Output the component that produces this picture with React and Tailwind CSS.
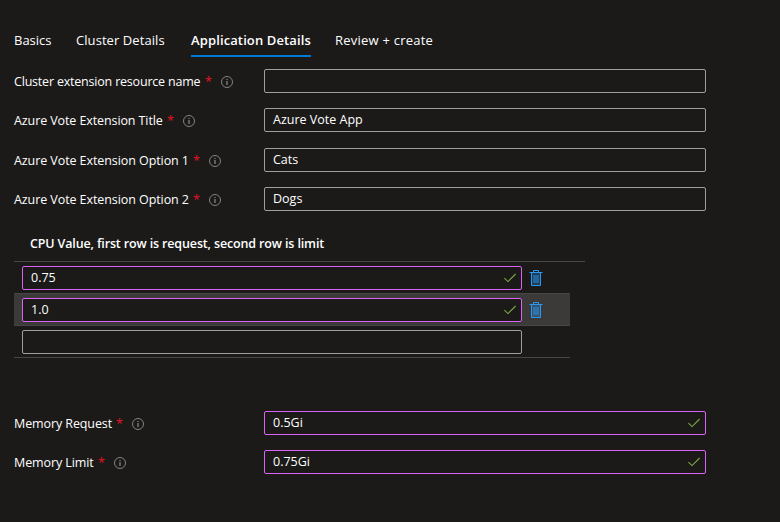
function Info() {
  return (
    <svg className="mt-px h-3 w-3 shrink-0" viewBox="0 0 12 12" fill="none" stroke="#85827f">
      <circle cx="6" cy="6" r="5.5" />
      <path d="M6 5v4M6 3v1" strokeWidth="1.3" />
    </svg>
  );
}

function Check() {
  return (
    <svg className="h-3 w-3 shrink-0" viewBox="0 0 12 12" fill="none" stroke="#7da345" strokeWidth="1.1">
      <path d="M.4 6.2 4 9.6 11.6 2" />
    </svg>
  );
}

function Trash() {
  return (
    <svg className="h-4 w-3.5 shrink-0" viewBox="0 0 14 16" fill="none" stroke="#2899f5">
      <path d="M2.5 3h9v12.5h-9z" fill="#2899f5" fillOpacity=".28" stroke="none" />
      <path d="M.5 2.5h13M4.5 2.5v-2h5v2M2.5 3v12.5h9V3" />
      <path d="M4 5h6v8H4z" fill="#2899f5" fillOpacity=".45" stroke="none" />
    </svg>
  );
}

function Field({ value = "", valid = false }) {
  return (
    <div
      className={`flex h-6 w-full items-center justify-between rounded-[2px] border bg-[#1b1a19] pl-2 pr-[5px] ${
        valid ? "border-[#da64f8]" : "border-[#a19f9d]"
      }`}
    >
      <span>{value}</span>
      {valid && <Check />}
    </div>
  );
}

function Row({ label, width, value, valid }) {
  return (
    <div className="flex h-6">
      <div className="flex w-[250px] shrink-0 items-center pt-px">
        <span className={`${width} whitespace-nowrap`}>{label}</span>
        <span className="ml-1 w-[6px] text-[#e81123]">*</span>
        <span className="ml-[10px]"><Info /></span>
      </div>
      <div className="w-[442px]"><Field value={value} valid={valid} /></div>
    </div>
  );
}

const tab = "h-[33px] whitespace-nowrap text-[13px] leading-[33px]";

export default function App() {
  return (
    <main className="h-[522px] w-[780px] overflow-hidden bg-[#1b1a19] pl-[14px] pt-6 font-['Open_Sans','Noto_Sans',sans-serif] text-[12.5px] leading-4 text-white">
      <nav className="flex">
        <span className={`${tab} w-[62px]`}>Basics</span>
        <span className={`${tab} w-[115px] tracking-[0.07px]`}>Cluster Details</span>
        <span className={`${tab} w-[120px] border-b-2 border-[#0078d4] font-semibold tracking-[0.12px]`}>Application Details</span>
        <span className={`${tab} ml-6 tracking-[0.23px]`}>Review + create</span>
      </nav>
      <section className="mt-3">
        <Row label="Cluster extension resource name" width="w-[187px] tracking-[-0.2px]" />
        <div className="mt-[15px]"><Row label="Azure Vote Extension Title" width="w-[149px] tracking-[-0.1px]" value="Azure Vote App" /></div>
        <div className="mt-4"><Row label="Azure Vote Extension Option 1" width="w-[175px] tracking-[-0.08px]" value="Cats" /></div>
        <div className="mt-[15px]"><Row label="Azure Vote Extension Option 2" width="w-[175px] tracking-[-0.08px]" value="Dogs" /></div>
      </section>
      <section className="mt-6 w-[571px]">
        <h2 className="h-[27px] border-b border-[#484644] pl-4 pt-px font-semibold tracking-[-0.14px]">CPU Value, first row is request, second row is limit</h2>
        <div className="flex h-8 w-[556px] items-center gap-[7px] border-b border-transparent pl-2 pt-px">
          <div className="w-[500px]"><Field value="0.75" valid /></div>
          <Trash />
        </div>
        <div className="-mt-px flex h-[33px] w-[556px] items-center gap-[7px] border-y border-[#484644] bg-[#3b3a39] pl-2">
          <div className="w-[500px]"><Field value="1.0" valid /></div>
          <Trash />
        </div>
        <div className="flex h-8 w-[556px] items-center border-b border-[#484644] pl-2">
          <div className="w-[500px]"><Field /></div>
        </div>
      </section>
      <section className="mt-[53px] flex flex-col gap-[15px]">
        <Row label="Memory Request" width="w-[98px] tracking-[-0.1px]" value="0.5Gi" valid />
        <Row label="Memory Limit" width="w-[80px] tracking-[-0.1px]" value="0.75Gi" valid />
      </section>
    </main>
  );
}
